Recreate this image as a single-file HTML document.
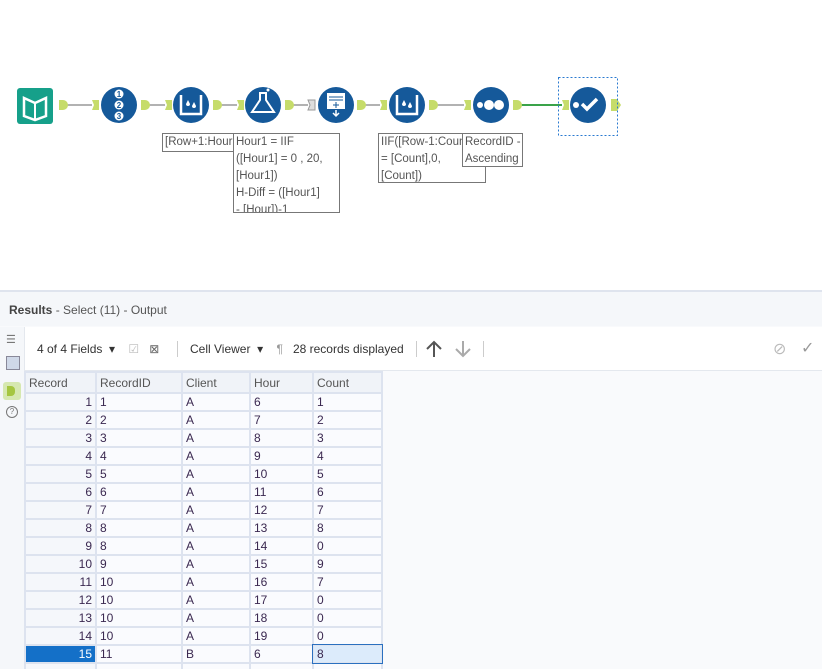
<!DOCTYPE html>
<html style="overflow:hidden;height:669px"><head><meta charset="utf-8"><style>
body{margin:0;width:822px;height:669px;overflow:hidden;background:#fff;font-family:"Liberation Sans",sans-serif;position:relative}
.ann{position:absolute;border:1px solid #777;background:#fff;font-size:11.5px;color:#555;line-height:17px;padding:0 2px;white-space:nowrap;overflow:hidden}
#res{position:absolute;left:0;top:290px;width:822px;height:379px;background:#f9fafc;border-top:2px solid #dfe4ee}
.tb{position:absolute;font-size:12px;color:#333}
#tw{position:absolute;left:24px;top:371px;width:362px;height:298px;overflow:hidden}
table{border-collapse:collapse;font-size:12px;table-layout:fixed;width:359px}
tr{height:18px}
tr.h{height:21px}
td{border:2px solid #dde3ef;padding:0 3px;background:#fafbfe;color:#3a2850;line-height:14px;overflow:hidden;white-space:nowrap}
th{border:2px solid #dde3ef;padding:0 3px;background:#f0f3f8;color:#555;font-weight:normal;text-align:left;line-height:16px}
td.r{text-align:right;background:#f5f7fb}
</style></head><body>
<svg width="822" height="290" style="position:absolute;left:0;top:0">
<g stroke="#999" stroke-width="1.5"><line x1="66" y1="105" x2="92" y2="105"/><line x1="148" y1="105" x2="165" y2="105"/><line x1="220" y1="105" x2="237" y2="105"/><line x1="292" y1="105" x2="308" y2="105"/><line x1="364" y1="105" x2="380" y2="105"/><line x1="436" y1="105" x2="464" y2="105"/></g>
<line x1="520" y1="105" x2="562" y2="105" stroke="#3aa34a" stroke-width="2"/>
<rect x="17" y="88" width="36" height="36" rx="3" fill="#16a08a"/>
<path d="M24 98 L35 103 L46 98 V116 L35 120 L24 116Z" fill="none" stroke="#fff" stroke-width="2.5"/>
<line x1="35" y1="103" x2="35" y2="119" stroke="#fff" stroke-width="2"/>
<g fill="#c6dc6a">
<path d="M59 100h4a5 5 0 0 1 0 10h-4z"/><path d="M92 100h7v10h-7l2-5z"/>
<path d="M141 100h4a5 5 0 0 1 0 10h-4z"/><path d="M165 100h7v10h-7l2-5z"/>
<path d="M213 100h4a5 5 0 0 1 0 10h-4z"/><path d="M237 100h7v10h-7l2-5z"/>
<path d="M285 100h4a5 5 0 0 1 0 10h-4z"/>
<path d="M357 100h4a5 5 0 0 1 0 10h-4z"/><path d="M380 100h7v10h-7l2-5z"/>
<path d="M429 100h4a5 5 0 0 1 0 10h-4z"/><path d="M464 100h7v10h-7l2-5z"/>
<path d="M513 100h4a5 5 0 0 1 0 10h-4z"/><path d="M562 100h7v10h-7l2-5z"/>
<path d="M611 99h6l4 6-4 6h-6z"/></g>
<path d="M308 100h7v10h-7l2-5z" fill="#ddd" stroke="#999"/>
<g fill="#15599a"><circle cx="119" cy="105" r="18"/><circle cx="191" cy="105" r="18"/><circle cx="263" cy="105" r="18"/><circle cx="336" cy="105" r="18"/><circle cx="407" cy="105" r="18"/><circle cx="491" cy="105" r="18"/><circle cx="588" cy="105" r="18"/></g>
<g fill="#fff"><circle cx="119" cy="94" r="4.5"/><circle cx="119" cy="105" r="4.5"/><circle cx="119" cy="116" r="4.5"/></g>
<g fill="#15599a" font-size="8" font-weight="bold" text-anchor="middle" font-family="Liberation Sans"><text x="119" y="97">1</text><text x="119" y="108">2</text><text x="119" y="119">3</text></g>
<path d="M181 95v19h20v-19" fill="none" stroke="#fff" stroke-width="2.5"/><path d="M188 100l-2 4a2 2 0 0 0 4 0z M194 102l-2 4a2 2 0 0 0 4 0z" fill="#fff"/>
<path d="M397 95v19h20v-19" fill="none" stroke="#fff" stroke-width="2.5"/><path d="M404 100l-2 4a2 2 0 0 0 4 0z M410 102l-2 4a2 2 0 0 0 4 0z" fill="#fff"/>
<path d="M259 93h8M260 93v7l-8 12h22l-8-12v-7" fill="none" stroke="#fff" stroke-width="2"/><circle cx="268" cy="90" r="1.5" fill="#fff"/>
<rect x="327" y="93" width="18" height="16" fill="#fff"/><g stroke="#15599a"><line x1="329" y1="97" x2="343" y2="97"/><line x1="329" y1="100" x2="343" y2="100"/><line x1="336" y1="102" x2="336" y2="108"/><line x1="333" y1="105" x2="339" y2="105"/></g><path d="M336 110v6m-3-3l3 3 3-3" stroke="#fff" fill="none" stroke-width="1.5"/>
<g fill="#fff"><circle cx="480" cy="105" r="3"/><circle cx="489" cy="105" r="5"/><circle cx="499" cy="105" r="5"/></g>
<circle cx="576" cy="105" r="3" fill="#fff"/><path d="M582 104l5 5 10-10" stroke="#fff" stroke-width="3.5" fill="none"/>
<rect x="558.5" y="77.5" width="59" height="58" fill="none" stroke="#2a7ad0" stroke-dasharray="2,2"/>
</svg>
<div class="ann" style="left:162px;top:133px;width:70px;height:17px">[Row+1:Hour1]</div>
<div class="ann" style="left:233px;top:133px;width:101px;height:78px">Hour1 = IIF<br>([Hour1] = 0 , 20,<br>[Hour1])<br>H-Diff = ([Hour1]<br>- [Hour])-1</div>
<div class="ann" style="left:378px;top:133px;width:102px;height:48px">IIF([Row-1:Count]<br>= [Count],0,<br>[Count])</div>
<div class="ann" style="left:462px;top:133px;width:55px;height:32px">RecordID -<br>Ascending</div>
<div id="res"></div>
<div style="position:absolute;left:0;top:292px;width:822px;height:34px;background:#f5f7fa"></div>
<div class="tb" style="left:9px;top:303px;color:#555"><b style="color:#444">Results</b> - Select (11) - Output</div>
<div style="position:absolute;left:24px;top:327px;width:798px;height:43px;background:#fff;border-bottom:1px solid #e4e8ee"></div>
<div style="position:absolute;left:0;top:327px;width:24px;height:342px;background:#f5f7fa;border-right:1px solid #e4e8ee"></div>
<div class="tb" style="left:6px;top:333px;color:#777;font-size:11px">☰</div>
<div style="position:absolute;left:6px;top:356px;width:12px;height:12px;background:#cfd8e8;border:1px solid #889"></div>
<div style="position:absolute;left:3px;top:382px;width:18px;height:18px;background:#d6e8b0;border-radius:3px"></div>
<div style="position:absolute;left:7px;top:386px;width:8px;height:10px;background:#a5c640;border-radius:0 4px 4px 0"></div>
<div style="position:absolute;left:6px;top:406px;width:10px;height:10px;border:1px solid #777;border-radius:50%;font-size:8px;text-align:center;line-height:10px;color:#777">?</div>
<div class="tb" style="left:37px;top:342px">4 of 4 Fields &nbsp;▾ &nbsp;&nbsp;&nbsp;<span style="color:#bbb">☑</span> &nbsp;&nbsp;<span style="color:#666">⊠</span></div>
<div style="position:absolute;left:177px;top:341px;width:1px;height:16px;background:#ccc"></div>
<div class="tb" style="left:190px;top:342px">Cell Viewer &nbsp;▾ &nbsp;&nbsp;&nbsp;<span style="color:#999">¶</span> &nbsp;&nbsp;28 records displayed</div>
<div style="position:absolute;left:416px;top:341px;width:1px;height:16px;background:#ccc"></div>
<svg style="position:absolute;left:424px;top:339px" width="50" height="20"><path d="M10 18V3M3 10l7-7 7 7" stroke="#555" stroke-width="2" fill="none"/><path d="M39 2v15M32 10l7 7 7-7" stroke="#aaa" stroke-width="2" fill="none"/></svg>
<div style="position:absolute;left:483px;top:341px;width:1px;height:16px;background:#ccc"></div>
<div class="tb" style="left:773px;top:339px;font-size:16px;color:#bbb">⊘</div>
<div class="tb" style="left:801px;top:338px;font-size:16px;color:#999">✓</div>
<div id="tw"><table>
<colgroup><col style="width:71px"><col style="width:86px"><col style="width:68px"><col style="width:63px"><col style="width:69px"></colgroup>
<tr class="h"><th>Record</th><th>RecordID</th><th>Client</th><th>Hour</th><th>Count</th></tr>
<tr><td class="r">1</td><td>1</td><td>A</td><td>6</td><td>1</td></tr>
<tr><td class="r">2</td><td>2</td><td>A</td><td>7</td><td>2</td></tr>
<tr><td class="r">3</td><td>3</td><td>A</td><td>8</td><td>3</td></tr>
<tr><td class="r">4</td><td>4</td><td>A</td><td>9</td><td>4</td></tr>
<tr><td class="r">5</td><td>5</td><td>A</td><td>10</td><td>5</td></tr>
<tr><td class="r">6</td><td>6</td><td>A</td><td>11</td><td>6</td></tr>
<tr><td class="r">7</td><td>7</td><td>A</td><td>12</td><td>7</td></tr>
<tr><td class="r">8</td><td>8</td><td>A</td><td>13</td><td>8</td></tr>
<tr><td class="r">9</td><td>8</td><td>A</td><td>14</td><td>0</td></tr>
<tr><td class="r">10</td><td>9</td><td>A</td><td>15</td><td>9</td></tr>
<tr><td class="r">11</td><td>10</td><td>A</td><td>16</td><td>7</td></tr>
<tr><td class="r">12</td><td>10</td><td>A</td><td>17</td><td>0</td></tr>
<tr><td class="r">13</td><td>10</td><td>A</td><td>18</td><td>0</td></tr>
<tr><td class="r">14</td><td>10</td><td>A</td><td>19</td><td>0</td></tr>
<tr><td class="r" style="background:#1470c8;color:#fff">15</td><td>11</td><td>B</td><td>6</td><td style="background:#dcebfb;outline:1px solid #2a70c0">8</td></tr>
<tr><td class="r"></td><td></td><td></td><td></td><td></td></tr>
</table></div>
</body></html>
